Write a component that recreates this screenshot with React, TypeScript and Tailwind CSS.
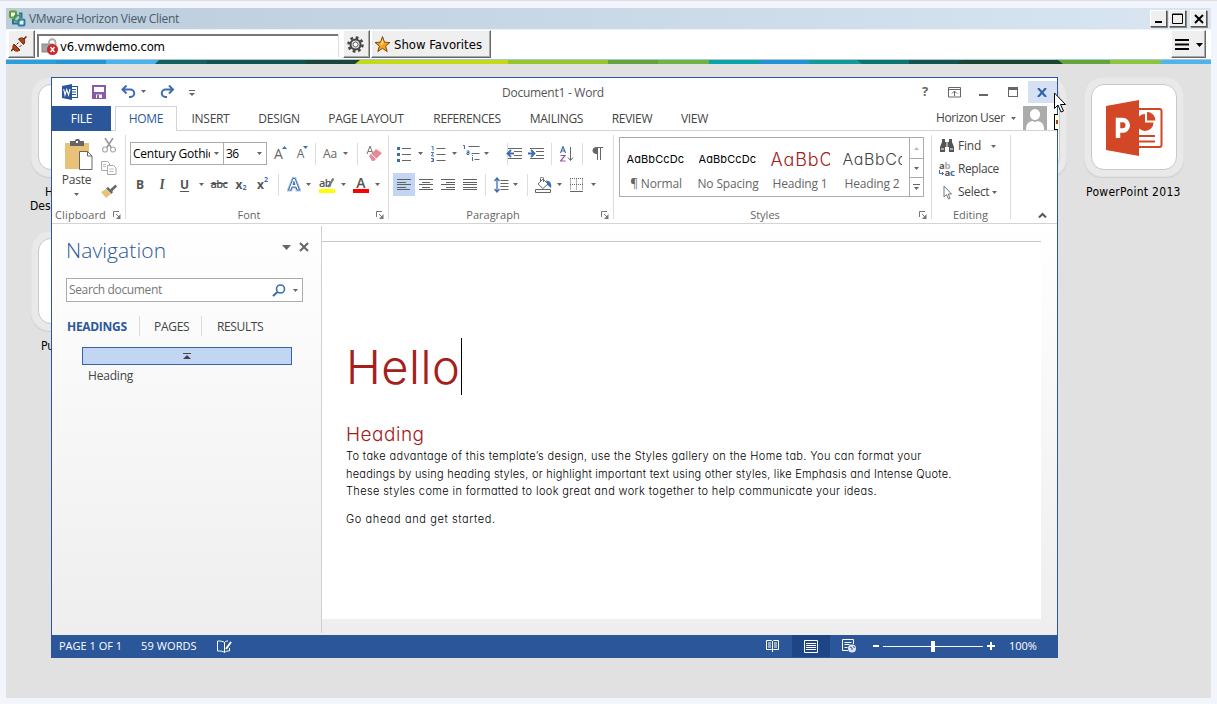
import type { ReactNode } from 'react'

const ui = "font-['Open_Sans','Noto_Sans',sans-serif]"
const gothic = "font-['Inter',sans-serif] [font-feature-settings:'cv11']"

function Icon({ w, h, className = '', children }: { w: number; h: number; className?: string; children: ReactNode }) {
  return (
    <svg width={w} height={h} viewBox={`0 0 ${w} ${h}`} fill="none" className={`block shrink-0 ${className}`}>
      {children}
    </svg>
  )
}

function Arrow({ className = '' }: { className?: string }) {
  return (
    <Icon w={5} h={3} className={className}>
      <path d="M0 0h5L2.5 3z" fill="#666" />
    </Icon>
  )
}

function Cell({ className, children }: { className: string; children?: ReactNode }) {
  return <div className={`flex h-full shrink-0 items-center justify-center ${className}`}>{children}</div>
}

function Rule({ className = 'h-[22px]' }: { className?: string }) {
  return <div className={`w-px shrink-0 bg-[#dcdcdc] ${className}`} />
}

function Launcher() {
  return (
    <Icon w={8} h={8}>
      <path d="M.5 6V.5H6M3 3l3 3" stroke="#777" />
      <path d="M7.5 3v5H3z" fill="#777" />
    </Icon>
  )
}

function Lines({ rows, color = '#606060' }: { rows: [number, number][]; color?: string }) {
  return (
    <Icon w={14} h={12}>
      {rows.map(([x, w], i) => (
        <rect key={i} x={x} y={i * 2.5} width={w} height="1" fill={color} shapeRendering="crispEdges" />
      ))}
    </Icon>
  )
}

function Tile({ className, children }: { className: string; children?: ReactNode }) {
  return (
    <div className={`absolute h-[100px] w-[100px] rounded-[18px] border border-[#e4e4e4] bg-[#e9e9e9] p-1.5 shadow-[0_1px_1px_#cfcfcf] ${className}`}>
      <div className="flex h-[86px] w-[86px] items-center justify-center rounded-[13px] border border-[#c9c9c9] bg-white">
        {children}
      </div>
    </div>
  )
}

function PowerPointLogo() {
  return (
    <Icon w={58} h={56} className="mt-0.5">
      <rect x="32" y="9" width="24.5" height="38" rx="2" fill="#fff" stroke="#d24726" strokeWidth="2" />
      <path d="M40 14a8.500 8.500 0 1 0 8.500 8.500H40z" fill="#d24726" />
      <path d="M42 12v8.500h8.500a8.500 8.500 0 0 0-8.500-8.500z" fill="#d24726" />
      <path d="M33 36h17M33 41.500h17" stroke="#d24726" strokeWidth="2" />
      <path d="M1 6 34 0v56L1 50z" fill="#d24726" />
      <path d="M13 38V20h4.500a5.300 5.300 0 0 1 0 10.600H13" stroke="#fff" strokeWidth="4.500" />
    </Icon>
  )
}

const strip: [number, number, string, number][] = [
  [0, 50, '#2a9fdc', 0], [50, 100, '#2496d6', 0], [100, 158, '#4ab3ec', 0], [149, 201, '#14605f', 4],
  [201, 302, '#10524f', 0], [300, 357, '#1b4536', 0], [349, 502, '#c5da17', 5], [502, 602, '#98c42c', 0],
  [602, 657, '#63a23c', 0], [652, 703, '#6fb344', 0], [703, 757, '#0aa3a8', 0], [752, 803, '#2393d6', 4],
  [803, 858, '#15989c', 0], [856, 903, '#0c746f', -5], [903, 957, '#12534f', 0], [952, 1057, '#1c4433', 4],
  [1057, 1104, '#63a43c', -5], [1104, 1158, '#8cc63f', 0], [1153, 1205, '#4fb4ec', 4],
]

function ColorStrip() {
  return (
    <Icon w={1205} h={4}>
      {strip.map(([a, b, c, slant]) => (
        <path key={a} d={`M${a + slant} 0H${b}V4H${a}z`} fill={c} />
      ))}
    </Icon>
  )
}

function ClientTitle() {
  const button = 'flex h-[17px] items-center justify-center border border-t-white border-l-white border-r-[#555] border-b-[#555] bg-[#efefef] shadow-[1px_1px_0_#888]'
  return (
    <div className="flex h-[21px] items-center bg-linear-to-r from-[#bbccdb] to-[#d9e6f2]">
      <Icon w={17} h={17} className="ml-[3px]">
        <path d="M10 3.500h2.500V8M4 9v4.500h5" stroke="#2c7486" strokeWidth="2" />
        <rect x="1" y="1.500" width="6" height="6" rx="1" stroke="#5f9e2f" strokeWidth="2" fill="#f2f8ea" />
        <rect x="9.500" y="9.500" width="6" height="6" rx="1" stroke="#2b7ba6" strokeWidth="2" fill="#e4f2f8" />
        <rect x="5.500" y="5.500" width="5.500" height="5.500" rx="1" stroke="#3b8a7a" strokeWidth="1.500" />
      </Icon>
      <div className={`ml-[3px] w-[200px] text-[12px] tracking-[-0.28px] whitespace-nowrap text-[#4a5a6a] ${ui}`}>VMware Horizon View Client</div>
      <div className="ml-auto flex pr-[4px]">
        <div className={`${button} w-[17px]`}>
          <Icon w={8} h={9}><path d="M0 8h7" stroke="#000" strokeWidth="2" /></Icon>
        </div>
        <div className={`${button} ml-0.5 w-[17px]`}>
          <Icon w={11} h={11}><path d="M.5 1h10v9.500H.5zM0 1.500h11" stroke="#000" /></Icon>
        </div>
        <div className={`${button} ml-1 w-[17px]`}>
          <Icon w={10} h={10}><path d="M1 1l8 8M9 1L1 9" stroke="#000" strokeWidth="2" /></Icon>
        </div>
      </div>
    </div>
  )
}

function ClientToolbar() {
  const button = 'flex h-7 shrink-0 items-center border border-t-white border-l-white border-r-[#666] border-b-[#666] bg-[#efefef] shadow-[inset_-1px_-1px_0_#aaa]'
  const tahoma = "font-['DejaVu_Sans_Condensed','DejaVu_Sans',sans-serif] font-stretch-condensed"
  return (
    <div className="flex h-[30px] items-start border-b border-[#a9c6d8] bg-white">
      <div className={`${button} ml-0.5 w-[27px]`}>
        <Icon w={16} h={16} className="ml-0.5">
          <path d="M0 15l3.500-3.500M12 4l3.500-3.500" stroke="#6b2408" strokeWidth="1.500" />
          <path d="M3 8l6 6c-2 1.500-4.500 1.500-6 0s-1.500-4 0-6z" fill="#b5430f" stroke="#6b2408" />
          <path d="M7.500 3c2-1.500 4.500-1.500 5.500 0s1 4-.5 5.500z" fill="#b5430f" stroke="#6b2408" />
          <path d="M5.500 8.500l2-2M8.500 11l2-2" stroke="#6b2408" />
        </Icon>
      </div>
      <div className="mt-[4px] ml-[2px] flex h-[23px] w-[301px] items-center border-t-2 border-l-2 border-t-[#777] border-l-[#777] bg-white shadow-[1px_0_0_#ddd]">
        <Icon w={18} h={18} className="ml-0.5">
          <rect x="1" y="6" width="11" height="8" fill="#a4a4a4" stroke="#888" />
          <path d="M8 6V4.500a3.200 3.200 0 0 1 6.500 0V7" stroke="#aaa" strokeWidth="1.800" />
          <circle cx="11.500" cy="11.500" r="5.500" fill="#d2232a" />
          <path d="M9.500 9l4 5M13.500 9l-4 5" stroke="#fff" strokeWidth="1.500" />
        </Icon>
        <span className={`ml-px text-[13px] tracking-[-0.2px] text-black ${tahoma}`}>v6.vmwdemo.com</span>
      </div>
      <div className={`${button} ml-[5px] w-[27px] border-l-[#666]`}>
        <Icon w={17} h={17} className="ml-[3px]">
          <circle cx="8.500" cy="8.500" r="7" stroke="#444" strokeWidth="2.500" strokeDasharray="2.750 2.750" />
          <circle cx="8.500" cy="8.500" r="5" fill="#ddd" stroke="#444" strokeWidth="2" />
          <circle cx="8.500" cy="8.500" r="2.500" fill="#fff" stroke="#666" />
        </Icon>
      </div>
      <div className={`${button} ml-px w-[120px] border-l-[#666]`}>
        <Icon w={17} h={17} className="ml-0.5">
          <path d="M8.500.5l2 5.700 5.500.3-4.400 3.500 1.600 5.500-4.700-3.100-4.700 3.100L5.400 10 1 6.500l5.500-.3z" fill="#f9a11b" stroke="#7a4a10" />
          <path d="M8.500 3l1.200 4-3.200 3 .5-3z" fill="#ffe27a" />
        </Icon>
        <span className={`ml-[3px] pt-px text-[13px] whitespace-nowrap text-black ${tahoma}`}>Show Favorites</span>
      </div>
      <div className={`${button} mr-[5px] ml-auto w-[35px]`}>
        <Icon w={28} h={12} className="ml-[3px]">
          <path d="M0 2h14M0 6.500h14M0 11h14" stroke="#000" strokeWidth="2" />
          <path d="M21 5h7l-3.500 4z" fill="#000" />
        </Icon>
      </div>
    </div>
  )
}

function WordTitle() {
  return (
    <div className="flex h-7 items-center">
      <Icon w={17} h={16} className="ml-[10px]">
        <rect x="8" y="2.500" width="7.500" height="11" stroke="#2b579a" fill="#fff" />
        <path d="M10 5.500h4M10 8h4M10 10.500h4" stroke="#2b579a" />
        <path d="M0 2l10-2v16L0 14z" fill="#2b579a" />
        <path d="M1.700 5l1.300 6 1.700-5.500L6.500 11 8 5" stroke="#fff" strokeWidth="1.100" />
      </Icon>
      <Icon w={14} h={14} className="ml-[13px]">
        <path d="M1 1h12v12H1z" stroke="#8a59a8" strokeWidth="2" fill="#fff" />
        <path d="M1 7h12v6H1z" fill="#8a59a8" />
        <path d="M4 9.500h6V13H4z" fill="#fff" />
        <path d="M5 10h2v3H5z" fill="#8a59a8" />
      </Icon>
      <Icon w={15} h={13} className="mb-0.5 ml-[15px]">
        <path d="M5.500.5L1.500 4.500l4 4M2 4.500h7.500a3.700 3.700 0 0 1 0 7.500H8" stroke="#3f6cb0" strokeWidth="2" />
      </Icon>
      <Arrow className="mb-0.5 ml-[5px]" />
      <Icon w={15} h={13} className="mb-0.5 ml-[14px]">
        <path d="M9 .5l4 4-4 4M13 4.500H5.500a3.700 3.700 0 0 0 0 7.500H7" stroke="#3f6cb0" strokeWidth="2" />
      </Icon>
      <Icon w={6} h={7} className="mt-0.5 ml-[14px]">
        <path d="M0 .5h6" stroke="#666" />
        <path d="M0 3h6L3 6z" fill="#666" />
      </Icon>
      <div className="mt-0.5 ml-[307px] w-[103px] text-[12px] tracking-[-0.26px] whitespace-nowrap text-[#555]">Document1 - Word</div>
      <div className="ml-auto flex h-full items-center">
        <Cell className="w-[30px] text-[13px] font-bold text-[#666]">?</Cell>
        <Cell className="w-[28px]">
          <Icon w={13} h={11}>
            <path d="M.5.5h12v9.500H.5zM.5 2.500h12" stroke="#666" />
            <path d="M6.500 9V4.500M4 6.500L6.500 4 9 6.500" stroke="#666" />
          </Icon>
        </Cell>
        <Cell className="w-[30px]">
          <div className="mt-[5px] h-0.5 w-[9px] bg-[#666]" />
        </Cell>
        <Cell className="w-[30px]">
          <div className="h-[10px] w-[10px] border border-t-[3px] border-[#666]" />
        </Cell>
        <Cell className="w-[29px]">
          <div className="flex h-[22px] w-full items-center justify-center bg-[#d5e1f2] pr-0.5">
            <Icon w={10} h={9}><path d="M1 0l8 9M9 0L1 9" stroke="#2f5faf" strokeWidth="2" /></Icon>
          </div>
        </Cell>
      </div>
    </div>
  )
}

const tabs: [string, string][] = [
  ['INSERT', 'w-[67px]'],
  ['DESIGN', 'w-[70px]'],
  ['PAGE LAYOUT', 'w-[104px]'],
  ['REFERENCES', 'w-[98px] tracking-[-0.36px]'],
  ['MAILINGS', 'w-[81px]'],
  ['REVIEW', 'w-[70px]'],
  ['VIEW', 'w-[55px]'],
]

function WordTabs() {
  return (
    <div className="flex h-[25px] text-[12px] tracking-[-0.3px] text-[#444]">
      <div className="flex w-[59px] items-center justify-center bg-[#2b579a] text-white">FILE</div>
      <div className="w-1 border-b border-[#d4d4d4]" />
      <div className="flex w-[62px] items-center justify-center border border-b-0 border-[#d4d4d4] text-[#2b579a]">HOME</div>
      {tabs.map(([name, cls]) => (
        <div key={name} className={`flex items-center justify-center border-b border-[#d4d4d4] pt-0.5 whitespace-nowrap ${cls}`}>
          {name}
        </div>
      ))}
      <div className="flex grow items-center justify-end border-b border-[#d4d4d4] pr-[10px]">
        <span className="w-[68px] tracking-[-0.4px] whitespace-nowrap">Horizon User</span>
        <Arrow className="mx-[7px]" />
        <Icon w={24} h={24}>
          <path d="M0 0h24v24H0z" fill="#ababab" />
          <path d="M12 3a5 5 0 0 1 5 5.500c0 3-2 5.500-5 5.500s-5-2.500-5-5.500A5 5 0 0 1 12 3zM3 24c0-6 2-8 6-9l3 1 3-1c4 1 6 3 6 9z" fill="#fff" />
        </Icon>
      </div>
    </div>
  )
}

function GroupLabel({ children, className = '', launcher = true }: { children: string; className?: string; launcher?: boolean }) {
  return (
    <div className="flex h-3.5 items-center text-[11px] text-[#666]">
      <div className={`grow text-center whitespace-nowrap ${className}`}>{children}</div>
      {launcher && <Launcher />}
    </div>
  )
}

function Clipboard() {
  return (
    <div className="flex w-[73px] flex-col justify-between pr-1">
      <div className="flex h-[72px]">
        <div className="flex w-[50px] flex-col items-center pt-1">
          <Icon w={29} h={31} className="ml-1">
            <path d="M1 4h24v26H1z" fill="#e9c278" />
            <path d="M6 7V2h5c0-3 5-3 5 0h4v5z" fill="#666" />
            <path d="M12 2h2v2h-2z" fill="#fff" />
            <path d="M15.500 12.500h8l4.500 4.500v13.500H15.500z" fill="#fff" stroke="#666" />
            <path d="M23.500 12.500V17H28" stroke="#666" />
          </Icon>
          <span className="mt-0.5 text-[12px] leading-4 tracking-[-0.2px] text-[#444]">Paste</span>
          <Arrow className="mt-[5px]" />
        </div>
        <div className="flex grow flex-col items-center gap-[8px] pt-[3px] pr-1">
          <Icon w={14} h={15}>
            <path d="M3 0l6.500 10M11 0L4.500 10" stroke="#999" strokeWidth="1.600" />
            <circle cx="3" cy="11.500" r="2.500" stroke="#aaa" strokeWidth="1.200" />
            <circle cx="11" cy="11.500" r="2.500" stroke="#aaa" strokeWidth="1.200" />
          </Icon>
          <Icon w={16} h={14}>
            <path d="M.5.5h6l2 2v7h-8z" stroke="#aaa" fill="#fff" />
            <path d="M6.500 4.500h6l2.500 2.500v6.500H6.500z" stroke="#aaa" fill="#fff" />
            <path d="M2 3.500h3M2 5.500h3M8.500 8h4M8.500 10.500h4" stroke="#bbb" />
          </Icon>
          <Icon w={16} h={14} className="mt-px">
            <path d="M0 8l5-3 5 5-5 4z" fill="#e9c278" />
            <path d="M5 4.500L7 3l5 5-1.500 2z" fill="#666" />
            <path d="M9 5.500L14.500.5l1.500 2-5 5z" fill="#666" />
          </Icon>
        </div>
      </div>
      <GroupLabel className="pr-1 tracking-[0.1px]">Clipboard</GroupLabel>
    </div>
  )
}

function FontGroup() {
  return (
    <div className="flex w-[262px] flex-col justify-between pr-1 pl-1">
      <div className="pt-[7px]">
        <div className="flex h-[23px] items-center text-[#666]">
          <div className="flex h-[23px] w-[94px] items-center border border-[#ababab] pr-1 pl-0.5 text-[12px] text-black">
            <span className="w-[77px] overflow-hidden tracking-[-0.22px] whitespace-nowrap">Century Gothic</span>
            <Arrow className="ml-auto" />
          </div>
          <div className="flex h-[23px] w-[43px] items-center border border-l-0 border-[#ababab] pr-1 pl-0.5 text-[12px] text-black">
            <span className="tracking-[-0.6px]">36</span>
            <Arrow className="ml-auto" />
          </div>
          <Cell className="ml-1.5 w-[15px] text-[14px]">A<Icon w={5} h={3} className="-ml-px mb-3"><path d="M0 3h5L2.500 0z" fill="#3f6cb0" /></Icon></Cell>
          <Cell className="ml-[7px] w-[15px] text-[12px]">A<Icon w={5} h={3} className="-ml-px mb-3"><path d="M0 0h5L2.500 3z" fill="#3f6cb0" /></Icon></Cell>
          <Rule className="ml-[5px] h-[22px]" />
          <div className="ml-[7px] w-[18px] text-[12px] tracking-[-0.1px]">Aa</div>
          <Arrow className="ml-[2px]" />
          <Rule className="ml-[9px] h-[22px]" />
          <Icon w={17} h={16} className="ml-[8px]">
            <path d="M1 8L4 0l3 8M2 5.500h4" stroke="#777" />
            <path d="M3 10l7-7 6 4-8 8H6z" fill="#e88997" />
            <path d="M5.500 8.500l5 4.500" stroke="#fff" />
          </Icon>
        </div>
        <div className="mt-2 flex h-[23px] items-center text-[12px] text-[#555]">
          <Cell className="w-[20px] font-bold">B</Cell>
          <Cell className="w-[24px] font-serif text-[13px] font-bold italic">I</Cell>
          <Cell className="w-[21px] font-bold underline underline-offset-2">U</Cell>
          <Cell className="w-[12px]"><Arrow /></Cell>
          <Cell className="w-[24px] text-[11px] font-semibold tracking-[-0.6px] line-through">abc</Cell>
          <Cell className="w-[20px] font-bold">x<span className="mt-2 text-[7px] text-[#3f6cb0]">2</span></Cell>
          <Cell className="w-[23px] font-bold">x<span className="mb-2 text-[7px] text-[#3f6cb0]">2</span></Cell>
          <Rule className="ml-1 h-[22px]" />
          <Icon w={14} h={15} className="ml-2">
            <path d="M1.500 13L6 1.500h2L12.500 13H10L9 10H5l-1 3zM6 7.500h2L7 4.500z" fill="#fff" stroke="#a9c6ea" strokeWidth="2.800" />
            <path d="M1.500 13L6 1.500h2L12.500 13H10L9 10H5l-1 3zM6 7.500h2L7 4.500z" fill="#fff" stroke="#3f6cb0" />
          </Icon>
          <Arrow className="ml-[5px]" />
          <div className="ml-[8px] flex w-[17px] flex-col">
            <div className="flex h-[11px] items-center text-[11px] leading-none font-semibold tracking-[-0.7px]">
              ab
              <Icon w={7} h={11} className="-ml-1"><path d="M6.500 1.500L1 10" stroke="#777" strokeWidth="2.200" /></Icon>
            </div>
            <div className="mt-px h-[4px] w-[16px] bg-[#ffff00]" />
          </div>
          <Arrow className="ml-[5px]" />
          <div className="ml-[7px] flex w-4 flex-col items-center">
            <div className="h-[11px] text-[14px] leading-[11px] font-semibold">A</div>
            <div className="mt-px h-[4px] w-4 bg-[#ff0000]" />
          </div>
          <Arrow className="ml-[6px]" />
        </div>
      </div>
      <GroupLabel className="pr-2">Font</GroupLabel>
    </div>
  )
}

const blue = '#3f6cb0'

function Paragraph() {
  return (
    <div className="flex w-[224px] flex-col justify-between pr-1 pl-1">
      <div className="pt-[7px]">
        <div className="flex h-[23px] items-center">
          <Icon w={15} h={16} className="ml-1">
            <path d="M5 2.500h9M5 8.500h9M5 14.500h9" stroke="#666" />
            <path d="M0 1h3v3H0zM0 7h3v3H0zM0 13h3v3H0z" fill={blue} />
          </Icon>
          <Arrow className="ml-[6px]" />
          <Icon w={15} h={16} className="ml-[8px]">
            <path d="M5.500 2.500h9M5.500 8.500h9M5.500 14.500h9" stroke="#666" />
            <path d="M.5.500h1.500V4.500M0 6.500h2.500L.5 10h2.500M0 12.500h2.500v3H0M1 14h1.500" stroke={blue} />
          </Icon>
          <Arrow className="ml-[6px]" />
          <Icon w={17} h={17} className="ml-[6px]">
            <path d="M5.500 1.500h11M8.500 8.500h8M11.500 14.500h5" stroke="#666" />
            <path d="M0 .5h1.500V4M3.500 6h2.500v3.500H4V7.500h2M9.500 10v1M9.500 12v4" stroke={blue} />
          </Icon>
          <Arrow className="ml-[4px]" />
          <Rule className="ml-[18px] h-[22px]" />
          <Icon w={16} h={12} className="-ml-0.5">
            <path d="M2 .5h14M8 3.500h8M8 7.500h8M2 10.500h14" stroke="#666" />
            <path d="M5 2L1.500 5.500 5 9M2 5.500h6" stroke={blue} strokeWidth="1.800" />
          </Icon>
          <Icon w={16} h={12} className="ml-[6px]">
            <path d="M2 .5h14M8 3.500h8M8 7.500h8M2 10.500h14" stroke="#666" />
            <path d="M3 2l3.500 3.500L3 9M0 5.500h6" stroke={blue} strokeWidth="1.800" />
          </Icon>
          <Rule className="ml-[7px] h-[22px]" />
          <Icon w={14} h={16} className="ml-[8px]">
            <path d="M.5 7L3 .5 5.500 7M1.500 5h3" stroke={blue} strokeWidth="1.200" />
            <path d="M.5 9.500h4.500L.5 15H5.500" stroke="#9455a8" strokeWidth="1.200" />
            <path d="M10.500 1v13M8 11.500l2.500 3 2.500-3" stroke="#666" />
          </Icon>
          <Rule className="ml-2 h-[22px]" />
          <Icon w={11} h={13} className="ml-[9px]">
            <path d="M5 0h6v1H5zM5 7C-1 7-1 0 5 0z" fill="#666" />
            <path d="M5.500.5V13M8.500.5V13" stroke="#666" />
          </Icon>
        </div>
        <div className="mt-2 flex h-[23px] items-center">
          <Cell className="w-[22px] bg-[#c2d5f2]"><Lines rows={[[0, 14], [0, 9], [0, 14], [0, 9], [0, 13]]} /></Cell>
          <Cell className="w-[22px]"><Lines rows={[[0, 14], [3, 8], [0, 14], [3, 8], [0, 14]]} /></Cell>
          <Cell className="w-[22px]"><Lines rows={[[0, 14], [5, 9], [0, 14], [5, 9], [0, 14]]} /></Cell>
          <Cell className="w-[22px]"><Lines rows={[[0, 14], [0, 14], [0, 14], [0, 14], [0, 14]]} /></Cell>
          <Rule className="ml-1 h-[22px]" />
          <Icon w={15} h={16} className="ml-[8px]">
            <path d="M6.500 3.500h8M6.500 6.500h8M6.500 9.500h8M6.500 12.500h8" stroke="#666" />
            <path d="M3 1v14M.5 4L3 1l2.500 3M.5 12L3 15l2.500-3" stroke={blue} strokeWidth="1.300" />
          </Icon>
          <Arrow className="ml-[4px]" />
          <Rule className="ml-[9px] h-[22px]" />
          <Icon w={17} h={16} className="ml-[7px]">
            <path d="M3 7l5-5 5 5-5 4.500zM5.500 5V1.500A1.500 1.500 0 0 1 8.500 1.500V5" stroke="#666" />
            <path d="M11 3.500c4 0 6 3 5 7.500l-3.500-3z" fill={blue} />
            <path d="M.5 12.500h15v3H.5z" stroke="#666" fill="#fff" />
          </Icon>
          <Arrow className="ml-[5px]" />
          <Icon w={13} h={14} className="ml-[8px]">
            <path d="M.5.5v12M6.500.5v12M12.500.5v12M0 .5h13M0 6.500h13" stroke="#666" strokeDasharray="1 1" />
            <path d="M0 13.500h13" stroke="#666" />
          </Icon>
          <Arrow className="ml-[8px]" />
        </div>
      </div>
      <GroupLabel className="pr-2">Paragraph</GroupLabel>
    </div>
  )
}

const styleItems: [string, string, string][] = [
  ['AaBbCcDc', '¶ Normal', 'text-[11px] tracking-[0.1px] text-black'],
  ['AaBbCcDc', 'No Spacing', 'text-[11px] tracking-[0.1px] text-black'],
  ['AaBbCc', 'Heading 1', 'text-[18px] font-light tracking-[0.9px] text-[#a5201b]'],
  ['AaBbCc', 'Heading 2', 'text-[16px] font-light tracking-[0.6px] text-[#444]'],
]

function Styles() {
  return (
    <div className="flex w-[317px] flex-col justify-between pr-1 pl-[5px]">
      <div className="mt-[2px] flex h-[60px] w-[305px] border border-[#ababab]">
        {styleItems.map(([sample, name, cls]) => (
          <div key={name} className="flex w-[72px] shrink-0 flex-col items-center">
            <div className={`mt-[9px] flex h-6 w-[59px] items-center overflow-hidden whitespace-nowrap ${gothic} ${cls}`}>{sample}</div>
            <div className="mt-[5px] text-[12px] leading-4 tracking-[-0.16px] whitespace-nowrap text-[#666]">{name}</div>
          </div>
        ))}
        <div className="ml-px flex grow flex-col border-l border-[#ababab]">
          <div className="flex h-[20px] items-center justify-center"><Icon w={5} h={3}><path d="M0 3h5L2.500 0z" fill="#bbb" /></Icon></div>
          <div className="flex h-[19px] items-center justify-center border-t border-[#ababab]"><Arrow /></div>
          <div className="flex grow items-center justify-center border-t border-[#ababab]">
            <Icon w={7} h={6}><path d="M0 .5h7" stroke="#666" /><path d="M1 3h5L3.500 6z" fill="#666" /></Icon>
          </div>
        </div>
      </div>
      <GroupLabel className="pr-2">Styles</GroupLabel>
    </div>
  )
}

function Editing() {
  return (
    <div className="flex w-[78px] flex-col justify-between pl-[7px]">
      <div className="flex flex-col text-[12px] text-[#444]">
        <div className="flex h-[22px] items-center">
          <Icon w={16} h={14}>
            <path d="M3 0h3v3h4V0h3v3l2 5v5h-5V8H6v5H1V8l2-5z" fill="#555" />
            <path d="M2 10h3M11 10h3M8 3v5" stroke="#fff" />
          </Icon>
          <span className="ml-[3px] w-[23px] tracking-[-0.2px]">Find</span>
          <Arrow className="ml-[10px]" />
        </div>
        <div className="flex h-[24px] items-center">
          <Icon w={16} h={16}>
            <text x="0" y="7.500" fontSize="9.500" fontWeight="700" fill="#555" letterSpacing="-0.3">a<tspan fill="#aaa">b</tspan></text>
            <text x="5.500" y="15" fontSize="9.500" fontWeight="700" fill="#555" letterSpacing="-0.3">a<tspan fill="#3f6cb0">c</tspan></text>
            <path d="M.5 9v3.500h4M3 11l1.500 1.500L3 14" stroke="#3f6cb0" />
          </Icon>
          <span className="ml-[3px] tracking-[-0.4px]">Replace</span>
        </div>
        <div className="flex h-[22px] items-center">
          <Icon w={16} h={15}>
            <path d="M5 1v11l2.500-2.500 2 4.500 1.500-.7L9.200 9H12.500z" stroke="#777" fill="#fff" />
          </Icon>
          <span className="ml-[3px] w-[31px] tracking-[-0.3px]">Select</span>
          <Arrow className="ml-[3px]" />
        </div>
      </div>
      <GroupLabel className="pr-[8px]" launcher={false}>Editing</GroupLabel>
    </div>
  )
}

function Ribbon() {
  return (
    <div className="flex h-[93px] border-b border-[#d4d4d4] pt-1 pb-px">
      <Clipboard />
      <Rule className="h-[84px]" />
      <FontGroup />
      <Rule className="h-[84px]" />
      <Paragraph />
      <Rule className="h-[84px]" />
      <Styles />
      <Rule className="h-[84px]" />
      <Editing />
      <Rule className="h-[84px]" />
      <div className="flex grow items-end justify-end pr-[10px] pb-[4px]">
        <Icon w={9} h={6}><path d="M1 5.500L4.500 2 8 5.500" stroke="#555" strokeWidth="2" /></Icon>
      </div>
    </div>
  )
}

function Navigation() {
  return (
    <div className="flex w-[269px] flex-col pl-[14px]">
      <div className="mt-[13px] flex h-7 items-center">
        <span className="w-[216px] text-[21px] font-light tracking-[0.1px] text-[#2b579a]">Navigation</span>
        <Icon w={9} h={5} className="mb-2"><path d="M0 0h9L4.500 5z" fill="#666" /></Icon>
        <Icon w={10} h={10} className="mb-2 ml-2"><path d="M1 1l8 8M9 1L1 9" stroke="#666" strokeWidth="2" /></Icon>
      </div>
      <div className="mt-[13px] flex h-6 w-[237px] items-center border border-[#ababab] bg-white pr-[4px] pl-0.5">
        <span className="text-[12px] tracking-[-0.36px] text-[#777]">Search document</span>
        <Icon w={14} h={13} className="ml-auto">
          <circle cx="8.500" cy="5" r="4" stroke={blue} strokeWidth="1.600" />
          <path d="M5.500 8L1 12" stroke={blue} strokeWidth="2.200" />
        </Icon>
        <Arrow className="ml-[7px]" />
      </div>
      <div className="mt-[14px] flex h-5 items-center text-[12px] text-[#444]">
        <span className="w-[73px] pt-0.5 pl-px font-bold tracking-[-0.3px] text-[#2b579a]">HEADINGS</span>
        <Rule className="h-5" />
        <span className="w-[61px] pt-0.5 pl-[14px] tracking-[-0.3px]">PAGES</span>
        <Rule className="h-5" />
        <span className="pt-0.5 pl-[15px] tracking-[-0.36px]">RESULTS</span>
      </div>
      <div className="mt-[11px] ml-4 flex h-[18px] w-[210px] items-center justify-center border border-[#3a62ab] bg-[#c2d5f2]">
        <Icon w={8} h={6}><path d="M0 .5h8" stroke="#444" /><path d="M0 6h8L4 2z" fill="#444" /></Icon>
      </div>
      <div className="mt-[3px] ml-[22px] text-[12px] leading-4 tracking-[-0.2px] text-[#444]">Heading</div>
    </div>
  )
}

function Page() {
  return (
    <div className={`flex h-[378px] w-[719px] flex-col border-t border-[#c6c6c6] bg-white pl-6 ${gothic}`}>
      <div className="mt-[96px] flex h-[57px] items-center">
        <span className="w-[115px] text-[47px] leading-[57px] font-light tracking-[0.5px] text-[#a5201b]">Hello</span>
        <div className="h-[57px] w-px bg-black" />
      </div>
      <div className="mt-[28px] text-[19px] leading-6 font-light tracking-[0.5px] text-[#a5201b]">Heading</div>
      <div className="mt-px flex flex-col text-[11px] leading-[17.500px] font-light whitespace-nowrap text-black">
        <p className="tracking-[0.36px]">To take advantage of this template’s design, use the Styles gallery on the Home tab. You can format your</p>
        <p className="tracking-[0.23px]">headings by using heading styles, or highlight important text using other styles, like Emphasis and Intense Quote.</p>
        <p className="tracking-[0.37px]">These styles come in formatted to look great and work together to help communicate your ideas.</p>
        <p className="mt-[10px] tracking-[0.6px]">Go ahead and get started.</p>
      </div>
    </div>
  )
}

function StatusBar() {
  return (
    <div className="flex h-[22px] items-center bg-[#2b579a] text-[11px] text-white">
      <span className="w-[82px] pl-[7px]">PAGE 1 OF 1</span>
      <span className="ml-[7px] w-[76px] tracking-[0.1px]">59 WORDS</span>
      <Icon w={15} h={13}>
        <path d="M7.500 2.500C6 1 3 1 .5 1v10c3 0 5.500 0 7 1.500 1.500-1.500 3-1.500 5-1.500V8M7.500 2.500v10M7.500 2.500C8.500 1.500 9 1 11 1" stroke="#fff" />
        <path d="M9 9l5-7" stroke="#fff" strokeWidth="2" />
      </Icon>
      <div className="ml-auto flex h-full items-center">
        <Cell className="w-[38px] pr-0.5 pb-0.5">
          <Icon w={13} h={13}>
            <path d="M.5 1.500h5l1 1 1-1h5v9h-5l-1 1-1-1h-5zM6.500 2v11" stroke="#fff" />
            <path d="M2 4h3M2 6h3M2 8h3M8 4h3M8 6h3M8 8h3" stroke="#fff" />
          </Icon>
        </Cell>
        <Cell className="w-[38px] bg-[#1e4586]">
          <Icon w={14} h={13}>
            <path d="M.5.5h13v12H.5zM2 3.500h10M2 5.500h10M2 7.500h10M2 9.500h10" stroke="#fff" />
          </Icon>
        </Cell>
        <Cell className="w-[38px]">
          <Icon w={15} h={14}>
            <path d="M6 11.500H.5V.5h11V5M2.500 3.500h7M2.500 5.500h5M2.500 8.500h3" stroke="#fff" />
            <circle cx="10" cy="9.500" r="4" fill="#dce6f5" />
            <path d="M8 8l2 1v2M11.500 7l1 2" stroke="#2b579a" />
          </Icon>
        </Cell>
        <div className="ml-[5px] h-0.5 w-1.5 bg-white" />
        <div className="ml-1 flex h-full w-[100px] items-center justify-center bg-[linear-gradient(#fff,#fff)] bg-[length:100%_1px] bg-center bg-no-repeat">
          <div className="h-[11px] w-1 bg-white" />
        </div>
        <Icon w={8} h={8} className="ml-1"><path d="M0 4h8M4 0v8" stroke="#fff" strokeWidth="2" /></Icon>
        <span className="ml-[14px] w-[48px]">100%</span>
      </div>
    </div>
  )
}

function WordWindow() {
  return (
    <div className={`absolute top-[13px] left-[45px] flex h-[581px] w-[1007px] flex-col border border-[#2b579a] bg-white ${ui}`}>
      <WordTitle />
      <WordTabs />
      <Ribbon />
      <div className="flex grow bg-linear-to-b from-white to-[#eeeeee]">
        <Navigation />
        <div className="mt-0.5 mb-0.5 w-px bg-[#d0d0d0]" />
        <div className="pt-[17px]">
          <Page />
        </div>
      </div>
      <StatusBar />
    </div>
  )
}

export default function App() {
  const label = "absolute text-[12px] leading-[14px] whitespace-nowrap text-black font-['DejaVu_Sans_Condensed','DejaVu_Sans',sans-serif] font-stretch-condensed"
  return (
    <div className="flex h-[704px] w-[1217px] flex-col overflow-hidden border-t border-[#dfdfe3] bg-[#f2f6fc] px-1.5 pt-[7px]">
      <ClientTitle />
      <div className="h-px bg-[#eef3f8]" />
      <ClientToolbar />
      <ColorStrip />
      <div className="relative h-[634px] overflow-hidden bg-[#e1e1e1]">
        <Tile className="top-[13px] left-[25px]" />
        <div className={`${label} top-[121px] left-[39px]`}>H</div>
        <div className={`${label} top-[135px] left-[24px]`}>Des</div>
        <Tile className="top-[167px] left-[25px]" />
        <div className={`${label} top-[275px] left-[35px]`}>Pu</div>
        <Tile className="top-[13px] left-[961px]" />
        <Tile className="top-[13px] left-[1078px]"><PowerPointLogo /></Tile>
        <div className={`${label} top-[121px] left-[1080px] tracking-[0.3px]`}>PowerPoint 2013</div>
        <WordWindow />
        <div className="absolute top-[50px] left-[1048px] h-[16px] w-[4px] overflow-hidden border border-r-0 border-black bg-[#ffffe1]">
          <div className="mt-[5px] ml-px h-[4px] w-[2px] bg-[#a5401b]" />
        </div>
        <Icon w={12} h={21} className="absolute top-[28px] left-[1048px]">
          <path d="M.5 1v15.500L4 13l3 7 2.500-1-3-6.500h5z" fill="#fff" stroke="#000" />
        </Icon>
      </div>
    </div>
  )
}
